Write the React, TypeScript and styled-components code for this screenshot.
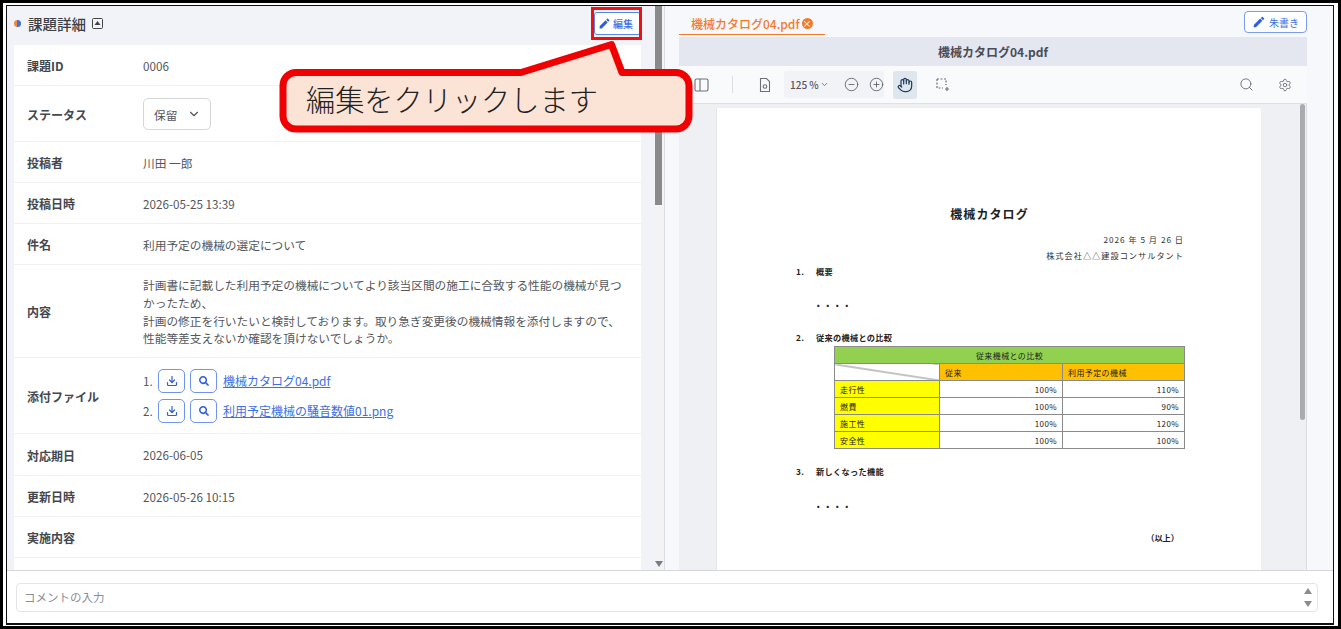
import React from "react";
import styled, { createGlobalStyle } from "styled-components";
import { ChevronDown, ChevronDown as Chev, CircleMinus, CirclePlus, Download, Hand, Search, Settings } from "lucide-react";
import { FaSearch } from "react-icons/fa";
import { MdEdit } from "react-icons/md";

const Global = createGlobalStyle`
  html, body { margin: 0; padding: 0; background: #fff; }
  body { width: 1341px; height: 629px; overflow: hidden; font-family: "Noto Sans CJK JP", "Noto Sans", sans-serif; }
  * { box-sizing: border-box; }
`;

const Frame = styled.div`
  position: relative;
  width: 1341px;
  height: 629px;
  border: 3px solid #000;
  padding: 2px 4px 1px 3px;
  background: #fff;
`;
const Inner = styled.div`
  height: 100%;
  border: 1px solid #111;
  border-bottom-width: 2px;
  display: flex;
  flex-direction: column;
  background: #fff;
`;
const Main = styled.div`
  height: 565px;
  display: flex;
  border-bottom: 1px solid #d4d6da;
`;
const LeftPanel = styled.section`
  width: 648px;
  background: #f2f3f8;
  display: flex;
  flex-direction: column;
  overflow: hidden;
`;
const PanelHead = styled.header`
  height: 39px;
  flex: none;
  display: flex;
  align-items: center;
  padding: 0 14px 5px 7px;
  gap: 5px;
`;
const Dot = styled.span`
  width: 7px;
  height: 7px;
  border-radius: 50%;
  background: linear-gradient(90deg, #f08a3c 50%, #3f6fe0 50%);
`;
const PanelTitle = styled.h2`
  margin: 0 0 0 2px;
  font-size: 14.5px;
  font-weight: 500;
  color: #3c3f46;
`;
const CollapseIcon = styled.svg`
  width: 11px;
  height: 11px;
  margin-left: 1px;
`;
const EditButton = styled.button`
  margin-left: auto;
  width: 47px;
  height: 23px;
  background: #fff;
  border: 1px solid #5b84e8;
  border-radius: 3px;
  color: #3f6fe0;
  font: 500 10px "Noto Sans CJK JP", sans-serif;
  display: flex;
  align-items: center;
  justify-content: center;
  gap: 2px;
  padding: 0 4px 0 0;
  svg { color: #2f5fd8; }
`;
const Rows = styled.div`
  margin-left: 7px;
  width: 627px;
  background: #fff;
  flex: 1;
`;
const Row = styled.div<{ $h: number }>`
  height: ${(p) => p.$h}px;
  display: grid;
  grid-template-columns: 116px 1fr;
  align-items: center;
  padding: 1px 0 0 13px;
  border-bottom: 1px solid #f0f1f4;
`;
const Label = styled.div`
  font-size: 12px;
  font-weight: 700;
  color: #44474e;
`;
const Value = styled.div`
  font-size: 11.7px;
  color: #53565c;
  line-height: 17.6px;
  padding-right: 17px;
`;
const Select = styled.div`
  width: 68px;
  height: 32px;
  border: 1px solid #d4d6da;
  border-radius: 5px;
  display: flex;
  align-items: center;
  justify-content: space-between;
  padding: 0 9px 0 10px;
  font-size: 11.7px;
  color: #53565c;
`;
const FileRow = styled.div`
  display: flex;
  align-items: center;
  height: 29.5px;
  gap: 5px;
`;
const FileNo = styled.span`
  width: 10px;
`;
const IconBtn = styled.span`
  width: 27px;
  height: 24px;
  border: 1px solid #6f94ee;
  border-radius: 5px;
  display: flex;
  align-items: center;
  justify-content: center;
  color: #2f5fd8;
  background: #fff;
`;
const FileLink = styled.a`
  margin-left: 1px;
  color: #3f6fe0;
  text-decoration: underline;
  font-size: 12px;
`;
const ScrollTrack = styled.div`
  width: 10px;
  flex: none;
  background: #f3f3f5;
  border-right: 1px solid #dcdde1;
  display: flex;
  flex-direction: column;
  justify-content: space-between;
  align-items: center;
  padding-bottom: 3px;
`;
const ScrollThumb = styled.div`
  width: 7px;
  height: 199px;
  margin-right: 2px;
  background: #8a8a8a;
`;
const DownArrow = styled.div`
  width: 0;
  height: 0;
  margin-right: 1px;
  border-left: 4px solid transparent;
  border-right: 4px solid transparent;
  border-top: 6px solid #7c7c7c;
`;
const RightPanel = styled.section`
  flex: 1;
  min-width: 0;
  background: #f6f8fc;
  padding: 5px 26px 0 14px;
  display: flex;
  flex-direction: column;
`;
const TabBar = styled.div`
  height: 26px;
  flex: none;
  display: flex;
  justify-content: space-between;
  align-items: flex-start;
`;
const Tab = styled.div`
  width: 146px;
  height: 24px;
  padding: 2px 0 0 12px;
  border-bottom: 1px solid #f47a2a;
  color: #f47a2a;
  font-size: 12px;
  font-weight: 500;
  display: flex;
  align-items: center;
  gap: 2px;
`;
const TabClose = styled.span`
  width: 11px;
  height: 11px;
  border-radius: 50%;
  background: #f47a2a;
  color: #fff;
  font-size: 9px;
  line-height: 11px;
  text-align: center;
`;
const MarkupButton = styled.button`
  width: 63px;
  height: 22px;
  background: #fff;
  border: 1px solid #7a9cf0;
  border-radius: 4px;
  color: #3f6fe0;
  font: 400 10px "Noto Sans CJK JP", sans-serif;
  display: flex;
  align-items: center;
  justify-content: center;
  gap: 3px;
  padding: 0;
  svg { color: #2f5fd8; }
`;
const Pdf = styled.div`
  flex: 1;
  min-height: 0;
  display: flex;
  flex-direction: column;
`;
const PdfTitle = styled.div`
  height: 29px;
  flex: none;
  background: #e4e7f0;
  display: flex;
  align-items: center;
  justify-content: center;
  font-size: 12px;
  font-weight: 700;
  color: #4a4d55;
`;
const Toolbar = styled.div`
  height: 38px;
  flex: none;
  background: #f9fafc;
  border-bottom: 1px solid #dde0e6;
  display: flex;
  align-items: center;
  padding: 0 15px;
  color: #6b6f78;
`;
const ToolDivider = styled.span`
  width: 1px;
  height: 17px;
  background: #dcdee3;
  margin: 0 25px 0 23px;
`;
const ZoomGroup = styled.div`
  height: 27px;
  width: 100px;
  margin-left: 12px;
  background: #f2f3f6;
  border-radius: 3px;
  display: flex;
  align-items: center;
  padding-left: 6px;
  gap: 10px;
  font-size: 10px;
  font-weight: 500;
  color: #53565c;
`;
const ZoomValue = styled.span`
  display: flex;
  align-items: center;
  width: 44px;
  gap: 1px;
`;
const HandBtn = styled.span`
  width: 24px;
  height: 28px;
  margin-left: 9px;
  border-radius: 3px;
  background: #dfe6ee;
  display: flex;
  align-items: center;
  justify-content: center;
  color: #1e3a5f;
`;
const SelectTool = styled.svg`
  width: 14px;
  height: 14px;
  margin-left: 19px;
`;
const ToolRight = styled.div`
  margin-left: auto;
  display: flex;
  gap: 24px;
  align-items: center;
`;
const Viewer = styled.div`
  flex: 1;
  min-height: 0;
  background: #eef0f3;
  padding: 4px 45px 0 37px;
  display: flex;
  overflow: hidden;
  position: relative;
  border-right: 1px solid #dcdde1;
`;
const ViewerThumb = styled.div`
  position: absolute;
  right: 1px;
  top: 0;
  width: 5px;
  height: 316px;
  border-radius: 3px;
  background: #a9abaf;
`;
const Page = styled.div`
  width: 545px;
  height: 480px;
  background: #fff;
  border-left: 1px solid #e3e4e7;
  padding: 96px 78px 0 79px;
  color: #222;
  font-size: 8.2px;
  flex: none;
`;
const DocTitle = styled.h1`
  margin: 0 0 7px;
  text-align: center;
  font-size: 12px;
  font-weight: 700;
  letter-spacing: 1.1px;
  line-height: 20px;
`;
const DocMeta = styled.div`
  text-align: right;
  margin-right: -1px;
  line-height: 16px;
  color: #333;
  letter-spacing: 1px;
`;
const DocHeading = styled.div<{ $top: number }>`
  margin-top: ${(p) => p.$top}px;
  font-weight: 700;
  display: flex;
  line-height: 12px;
  letter-spacing: .3px;
`;
const DocNo = styled.span`
  width: 20px;
`;
const DocDots = styled.div<{ $top: number }>`
  margin: ${(p) => p.$top}px 0 0 18px;
  letter-spacing: 1px;
  font-size: 8.5px;
  font-weight: 700;
  line-height: 12px;
`;
const DocTable = styled.table`
  margin: 3px 0 0 38px;
  width: 350px;
  border-collapse: collapse;
  table-layout: fixed;
  font-size: 8px;
  letter-spacing: .4px;
  color: #222;
  td, th { border: 1px solid #8a8a8a; height: 17px; padding: 0 5px; font-weight: 400; }
`;
const GreenCell = styled.th`
  background: #92d050;
  text-align: center;
`;
const OrangeCell = styled.td`
  background: #ffc000;
`;
const YellowCell = styled.td`
  background: #ffff00;
`;
const NumCell = styled.td`
  text-align: right;
`;
const SlashCell = styled.td`
  background: linear-gradient(to top right, #fff calc(50% - 1px), #888, #fff calc(50% + 1px));
`;
const DocEnd = styled.div`
  margin-top: 19px;
  text-align: right;
  padding-right: 4px;
  font-weight: 700;
  line-height: 12px;
`;
const CommentBar = styled.div`
  flex: 1;
  padding: 12px 15px 9px 9px;
  background: #fff;
`;
const CommentBox = styled.div`
  height: 29px;
  border: 1px solid #e4e5e8;
  border-radius: 4px;
  display: flex;
  align-items: center;
  justify-content: space-between;
  padding: 0 5px 1px 7px;
  font-size: 11.5px;
  color: #8a8d93;
`;
const Spinner = styled.div`
  display: flex;
  flex-direction: column;
  gap: 7px;
`;
const SpinUp = styled.i`
  display: block;
  width: 0;
  border-left: 4px solid transparent;
  border-right: 4px solid transparent;
  border-bottom: 6px solid #8c8c8c;
`;
const SpinDown = styled.i`
  display: block;
  width: 0;
  border-left: 4px solid transparent;
  border-right: 4px solid transparent;
  border-top: 6px solid #8c8c8c;
`;
const Highlight = styled.div`
  position: absolute;
  left: 588px;
  top: 4px;
  width: 51px;
  height: 33px;
  border: 3px solid #ee1111;
`;
const Callout = styled.div`
  position: absolute;
  left: 273px;
  top: 34px;
  width: 420px;
  height: 100px;
`;
const CalloutShape = styled.svg`
  position: absolute;
  inset: 0;
`;
const CalloutText = styled.div`
  position: absolute;
  left: 30px;
  top: 39px;
  font-size: 29.2px;
  font-weight: 300;
  line-height: 44px;
  color: #222;
  white-space: nowrap;
`;

const FileIcon = () => (
  <svg width="14" height="16" viewBox="0 0 14 16" fill="none" stroke="#6b6f78" strokeWidth="1.1">
    <path d="M2.5 1.5h6l3 3v10h-9z" />
    <circle cx="7" cy="9.5" r="1.8" />
  </svg>
);
const SidebarIcon = () => (
  <svg width="15" height="14" viewBox="0 0 15 14" fill="none" stroke="#6b6f78" strokeWidth="1.1">
    <rect x="1" y="1" width="13" height="12" rx="1.5" />
    <path d="M6 1v12" />
  </svg>
);

const rowsBefore: [string, number, string][] = [
  ["投稿者", 41, "川田 一郎"],
  ["投稿日時", 41, "2026-05-25 13:39"],
  ["件名", 41, "利用予定の機械の選定について"],
];

export default function App() {
  return (
    <Frame>
      <Global />
      <Inner>
        <Main>
          <LeftPanel>
            <PanelHead>
              <Dot />
              <PanelTitle>課題詳細</PanelTitle>
              <CollapseIcon viewBox="0 0 11 11">
                <rect x="0.5" y="0.5" width="10" height="10" rx="1" fill="none" stroke="#444" />
                <path d="M5.5 3L8.5 7H2.5z" fill="#444" />
              </CollapseIcon>
              <EditButton>
                <MdEdit size={13} />
                編集
              </EditButton>
            </PanelHead>
            <Rows>
              <Row $h={41}>
                <Label>課題ID</Label>
                <Value>0006</Value>
              </Row>
              <Row $h={56}>
                <Label>ステータス</Label>
                <Select>
                  保留
                  <ChevronDown size={14} color="#555" />
                </Select>
              </Row>
              {rowsBefore.map(([l, h, v]) => (
                <Row $h={h} key={l}>
                  <Label>{l}</Label>
                  <Value>{v}</Value>
                </Row>
              ))}
              <Row $h={93}>
                <Label>内容</Label>
                <Value>
                  計画書に記載した利用予定の機械についてより該当区間の施工に合致する性能の機械が見つかったため、
                  <br />
                  計画の修正を行いたいと検討しております。取り急ぎ変更後の機械情報を添付しますので、性能等差支えないか確認を頂けないでしょうか。
                </Value>
              </Row>
              <Row $h={76}>
                <Label>添付ファイル</Label>
                <Value>
                  <FileRow>
                    <FileNo>1.</FileNo>
                    <IconBtn><Download size={12} strokeWidth={2.4} /></IconBtn>
                    <IconBtn><FaSearch size={10} /></IconBtn>
                    <FileLink>機械カタログ04.pdf</FileLink>
                  </FileRow>
                  <FileRow>
                    <FileNo>2.</FileNo>
                    <IconBtn><Download size={12} strokeWidth={2.4} /></IconBtn>
                    <IconBtn><FaSearch size={10} /></IconBtn>
                    <FileLink>利用予定機械の騒音数値01.png</FileLink>
                  </FileRow>
                </Value>
              </Row>
              <Row $h={42}>
                <Label>対応期日</Label>
                <Value>2026-06-05</Value>
              </Row>
              <Row $h={41}>
                <Label>更新日時</Label>
                <Value>2026-05-26 10:15</Value>
              </Row>
              <Row $h={41}>
                <Label>実施内容</Label>
                <Value />
              </Row>
            </Rows>
          </LeftPanel>
          <ScrollTrack>
            <ScrollThumb />
            <DownArrow />
          </ScrollTrack>
          <RightPanel>
            <TabBar>
              <Tab>
                機械カタログ04.pdf
                <TabClose>×</TabClose>
              </Tab>
              <MarkupButton>
                <MdEdit size={14} />
                朱書き
              </MarkupButton>
            </TabBar>
            <Pdf>
              <PdfTitle>機械カタログ04.pdf</PdfTitle>
              <Toolbar>
                <SidebarIcon />
                <ToolDivider />
                <FileIcon />
                <ZoomGroup>
                  <ZoomValue>
                    125 %
                    <Chev size={9} />
                  </ZoomValue>
                  <CircleMinus size={15} strokeWidth={1.3} />
                  <CirclePlus size={15} strokeWidth={1.3} />
                </ZoomGroup>
                <HandBtn>
                  <Hand size={16} strokeWidth={1.8} />
                </HandBtn>
                <SelectTool viewBox="0 0 14 14" fill="none" stroke="#6b6f78" strokeWidth="1.2">
                  <path d="M1 1h9v6M1 1v9h6" strokeDasharray="2 1.5" />
                  <path d="M11 9v4M9 11h4" />
                </SelectTool>
                <ToolRight>
                  <Search size={15} strokeWidth={1.5} />
                  <Settings size={14} strokeWidth={1.5} />
                </ToolRight>
              </Toolbar>
              <Viewer>
                <Page>
                  <DocTitle>機械カタログ</DocTitle>
                  <DocMeta>
                    2026 年 5 月 26 日
                    <br />
                    株式会社△△建設コンサルタント
                  </DocMeta>
                  <DocHeading $top={2}>
                    <DocNo>1.</DocNo>概要
                  </DocHeading>
                  <DocDots $top={22}>・・・・</DocDots>
                  <DocHeading $top={20}>
                    <DocNo>2.</DocNo>従来の機械との比較
                  </DocHeading>
                  <DocTable>
                    <colgroup>
                      <col style={{ width: 105 }} />
                      <col style={{ width: 123 }} />
                      <col style={{ width: 122 }} />
                    </colgroup>
                    <tbody>
                      <tr>
                        <GreenCell colSpan={3}>従来機械との比較</GreenCell>
                      </tr>
                      <tr>
                        <SlashCell />
                        <OrangeCell>従来</OrangeCell>
                        <OrangeCell>利用予定の機械</OrangeCell>
                      </tr>
                      {[
                        ["走行性", "100%", "110%"],
                        ["燃費", "100%", "90%"],
                        ["施工性", "100%", "120%"],
                        ["安全性", "100%", "100%"],
                      ].map(([a, b, c]) => (
                        <tr key={a}>
                          <YellowCell>{a}</YellowCell>
                          <NumCell>{b}</NumCell>
                          <NumCell>{c}</NumCell>
                        </tr>
                      ))}
                    </tbody>
                  </DocTable>
                  <DocHeading $top={16}>
                    <DocNo>3.</DocNo>新しくなった機能
                  </DocHeading>
                  <DocDots $top={23}>・・・・</DocDots>
                  <DocEnd>（以上）</DocEnd>
                </Page>
                <ViewerThumb />
              </Viewer>
            </Pdf>
          </RightPanel>
        </Main>
        <CommentBar>
          <CommentBox>
            コメントの入力
            <Spinner>
              <SpinUp />
              <SpinDown />
            </Spinner>
          </CommentBox>
        </CommentBar>
      </Inner>
      <Highlight />
      <Callout>
        <CalloutShape width="420" height="100" viewBox="0 0 420 100">
          <path
            d="M20 35.5H245L335.500 7.500L346 35.500H400a13 13 0 0 1 13 13V79a13 13 0 0 1-13 13H20a13 13 0 0 1-13-13V48.500a13 13 0 0 1 13-13Z"
            fill="#fbe4d5"
            stroke="#f00000"
            strokeWidth="7"
            strokeLinejoin="round"
          />
        </CalloutShape>
        <CalloutText>編集をクリックします</CalloutText>
      </Callout>
    </Frame>
  );
}
